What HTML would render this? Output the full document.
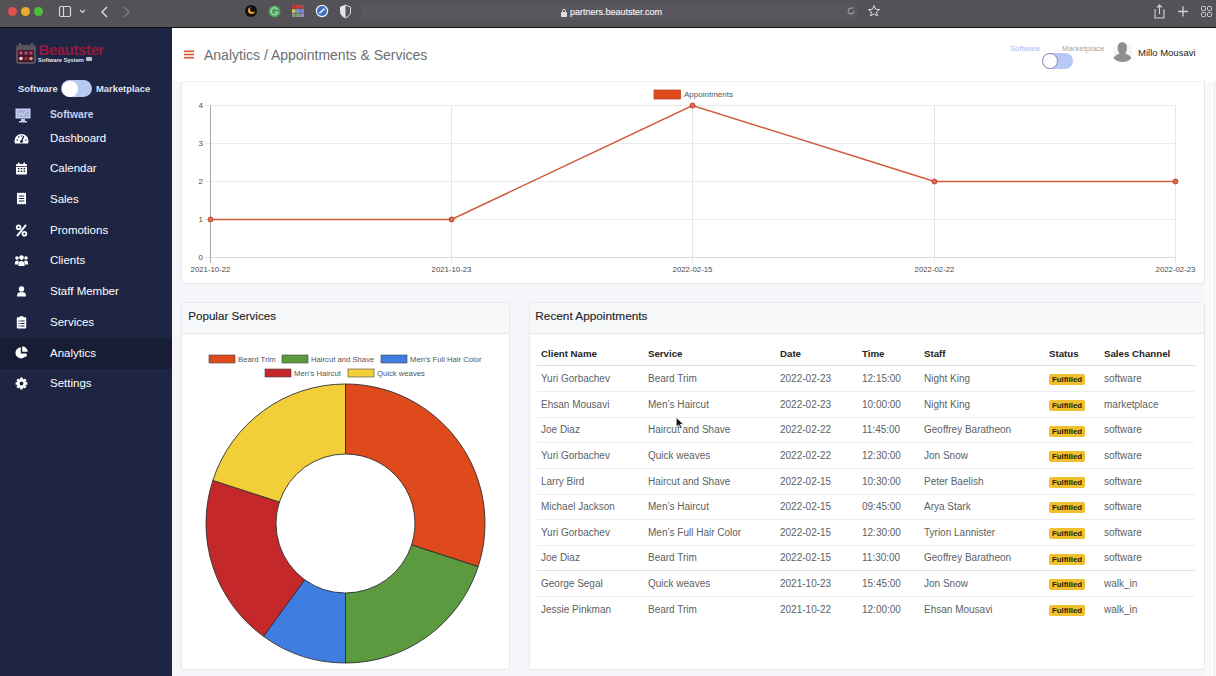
<!DOCTYPE html><html><head><meta charset="utf-8"><style>*{margin:0;padding:0;box-sizing:border-box}
html,body{width:1216px;height:676px;overflow:hidden;font-family:"Liberation Sans",sans-serif;background:#f5f5fa;position:relative}
.abs{position:absolute}
#chrome{position:absolute;left:0;top:0;width:1216px;height:28px;background:#545257;border-bottom:1px solid #151515}
#side{position:absolute;left:0;top:28px;width:172px;height:648px;background:#1e2542}
#hdr{position:absolute;left:172px;top:28px;width:1044px;height:53px;background:#fff}
.card{position:absolute;background:#fff;border:1px solid #e6e8ec;border-radius:3px}
.ch{position:absolute;left:0;top:0;right:0;height:31px;background:#f6f7f9;border-bottom:1px solid #e4e6ea;font-size:11.6px;color:#24272b;padding:5.6px 6.3px;white-space:nowrap;-webkit-text-stroke:0.15px #24272b}
.nav{position:absolute;left:50px;font-size:11.5px;color:#fff;white-space:nowrap}
.t{position:absolute;font-size:10px;color:#5c5f63;white-space:nowrap}
.th{position:absolute;font-size:9.7px;color:#222;font-weight:bold;white-space:nowrap}
.badge{position:absolute;background:#f0c02f;color:#2a2200;font-weight:bold;font-size:7.9px;border-radius:2px;height:11px;line-height:11.5px;width:36px;text-align:center}
.rl{position:absolute;height:1px;background:#eceef0}
</style></head><body><div id="chrome">
<div class="abs" style="left:8px;top:7px;width:9px;height:9px;border-radius:50%;background:#e0524a"></div>
<div class="abs" style="left:21px;top:7px;width:9px;height:9px;border-radius:50%;background:#e7ad2b"></div>
<div class="abs" style="left:34px;top:7px;width:9px;height:9px;border-radius:50%;background:#4fbf3a"></div>
<svg class="abs" style="left:56px;top:4px" width="100" height="16" viewBox="0 0 100 16">
 <rect x="3.5" y="2.5" width="11" height="10" rx="1.5" fill="none" stroke="#d8d6da" stroke-width="1.2"/>
 <line x1="7.5" y1="2.5" x2="7.5" y2="12.5" stroke="#d8d6da" stroke-width="1.2"/>
 <polyline points="24,6 26.5,8.5 29,6" fill="none" stroke="#d8d6da" stroke-width="1.2"/>
 <polyline points="51,3 46,8 51,13" fill="none" stroke="#d8d6da" stroke-width="1.5"/>
 <polyline points="68,3 73,8 68,13" fill="none" stroke="#7a777e" stroke-width="1.5"/>
</svg>
<div class="abs" style="left:245px;top:5px;width:12px;height:12px;border-radius:50%;background:#111"></div>
<div class="abs" style="left:248px;top:7px;width:7px;height:7px;border-radius:50%;background:#e8a52a"></div>
<div class="abs" style="left:250px;top:6px;width:6px;height:6px;border-radius:50%;background:#111"></div>
<svg class="abs" style="left:267px;top:4px" width="15" height="15" viewBox="0 0 15 15"><circle cx="7.5" cy="7.5" r="6" fill="#4c9e58"/><path d="M10.5 5.5 A3.5 3.5 0 1 0 10.8 8.5 L8 8.5" fill="none" stroke="#9fd8a4" stroke-width="1.5"/></svg>
<svg class="abs" style="left:291px;top:4px" width="14" height="14" viewBox="0 0 14 14"><g><rect x="1" y="1" width="3.6" height="3.6" fill="#c9363a"/><rect x="5.2" y="1" width="3.6" height="3.6" fill="#d63b3b"/><rect x="9.4" y="1" width="3.6" height="3.6" fill="#d03a44"/><rect x="1" y="5.2" width="3.6" height="3.6" fill="#d9c45a"/><rect x="5.2" y="5.2" width="3.6" height="3.6" fill="#7f9fd8"/><rect x="9.4" y="5.2" width="3.6" height="3.6" fill="#6f8fd8"/><rect x="1" y="9.4" width="3.6" height="3.6" fill="#7fa070"/><rect x="5.2" y="9.4" width="3.6" height="3.6" fill="#80a878"/><rect x="9.4" y="9.4" width="3.6" height="3.6" fill="#9a90c8"/></g></svg>
<svg class="abs" style="left:315px;top:4px" width="14" height="14" viewBox="0 0 14 14"><circle cx="7" cy="7" r="5.6" fill="#3f6fb8" stroke="#e8eefc" stroke-width="1.3"/><path d="M4.3 9.2 L9.7 4.8" stroke="#c8dcff" stroke-width="1.8"/></svg>
<svg class="abs" style="left:339px;top:4px" width="13" height="15" viewBox="0 0 13 15"><path d="M6.5 1.2 L11.5 3 L11.5 7.5 Q11.5 11.8 6.5 13.8 Q1.5 11.8 1.5 7.5 L1.5 3 Z" fill="#56535a" stroke="#e6e4e8" stroke-width="1"/><path d="M6.5 1.2 L1.5 3 L1.5 7.5 Q1.5 11.8 6.5 13.8 Z" fill="#e6e4e8"/></svg>
<div class="abs" style="left:361px;top:3px;width:496px;height:17px;border-radius:4px;background:#59575d"></div>
<svg class="abs" style="left:560px;top:8px" width="8" height="9" viewBox="0 0 8 9"><rect x="1" y="4" width="6" height="5" rx="1" fill="#ddd"/><path d="M2.5 4 V2.8 A1.5 1.5 0 0 1 5.5 2.8 V4" fill="none" stroke="#ddd" stroke-width="1"/></svg>
<div class="abs" style="left:570px;top:7.3px;font-size:9px;color:#f2f0f4;-webkit-text-stroke:0.15px #f2f0f4">partners.beautster.com</div>
<svg class="abs" style="left:846px;top:6px" width="10" height="10" viewBox="0 0 10 10"><path d="M8 5 A3 3 0 1 1 5 2 L7 2" fill="none" stroke="#aaa" stroke-width="1"/></svg>
<svg class="abs" style="left:867px;top:4px" width="14" height="14" viewBox="0 0 14 14"><path d="M7 1.5 L8.6 5.3 L12.6 5.5 L9.5 8 L10.5 12 L7 9.8 L3.5 12 L4.5 8 L1.4 5.5 L5.4 5.3 Z" fill="none" stroke="#dcdade" stroke-width="1"/></svg>
<svg class="abs" style="left:1152px;top:3px" width="64" height="18" viewBox="0 0 64 18">
 <path d="M4 7 H3 V15 H12 V7 H11" fill="none" stroke="#d6d4d8" stroke-width="1.1"/><path d="M7.5 11 V2 M5 4.5 L7.5 2 L10 4.5" fill="none" stroke="#d6d4d8" stroke-width="1.1"/>
 <path d="M31 3.5 V13.5 M26 8.5 H36" stroke="#d6d4d8" stroke-width="1.3"/>
 <rect x="49.5" y="3.5" width="4" height="4" rx="1" fill="none" stroke="#d6d4d8" stroke-width="1"/><rect x="55.5" y="3.5" width="4" height="4" rx="1" fill="none" stroke="#d6d4d8" stroke-width="1"/>
 <rect x="49.5" y="9.5" width="4" height="4" rx="1" fill="none" stroke="#d6d4d8" stroke-width="1"/><rect x="55.5" y="9.5" width="4" height="4" rx="1" fill="none" stroke="#d6d4d8" stroke-width="1"/>
</svg>
</div><div id="side"><svg class="abs" style="left:15px;top:15px" width="24" height="22" viewBox="0 0 24 22">
<rect x="1" y="2" width="20" height="19" rx="3" fill="#57535c"/>
<path d="M4 2 L5 0 L6 2 M16 2 L17 0 L18 2" stroke="#777" stroke-width="0.8" fill="none"/>
<rect x="3" y="7" width="16" height="12" fill="#4a1828"/>
<circle cx="6" cy="10" r="1.8" fill="#c5507f"/><circle cx="11" cy="10" r="1.8" fill="#8a5aa8"/><circle cx="16" cy="10" r="1.8" fill="#c03a62"/>
<circle cx="6" cy="15.5" r="1.8" fill="#e8dcdc"/><circle cx="11" cy="15.5" r="1.8" fill="#a82a3a"/><circle cx="16" cy="15.5" r="1.8" fill="#d8a070"/>
</svg>
<div class="abs" style="left:38.5px;top:13.6px;font-size:14.8px;font-weight:bold;color:#951a3d;letter-spacing:-0.3px">Beautster</div>
<div class="abs" style="left:38px;top:29px;font-size:5.6px;font-weight:bold;color:#e6e8f4;letter-spacing:0.05px">Software System</div>
<div class="abs" style="left:86px;top:28.5px;width:6px;height:4.5px;background:#b9bdd0;border-radius:1px"></div>
<div class="abs" style="left:18px;top:55.3px;font-size:9.4px;font-weight:bold;color:#dfe3f5">Software</div>
<div class="abs" style="left:61px;top:52px;width:31px;height:17px;border-radius:9px;background:#b8c8f0"></div>
<div class="abs" style="left:61.5px;top:52.5px;width:16px;height:16px;border-radius:50%;background:#fff"></div>
<div class="abs" style="left:96px;top:55.3px;font-size:9.4px;font-weight:bold;color:#dfe3f5">Marketplace</div>
<svg class="abs" style="left:15px;top:80px" width="17" height="15" viewBox="0 0 17 15"><rect x="0.5" y="0.5" width="15" height="10" fill="#c9d0f2"/><rect x="2" y="2" width="12" height="7" fill="#a9b2dc"/><path d="M3 8 L6 5 L8 7 L12 3" stroke="#e8ecff" stroke-width="0.8" fill="none"/><rect x="6" y="11" width="4" height="2" fill="#c9d0f2"/><rect x="4" y="13" width="8" height="1.5" fill="#c9d0f2"/></svg>
<div class="abs" style="left:50px;top:80.5px;font-size:10.3px;font-weight:bold;color:#c9cef0">Software</div><svg class="abs" style="left:13.5px;top:102.8px" width="15" height="15" viewBox="0 0 15 15"><path d="M1 12.5 Q0.5 11 0.5 10 A7 7 0 0 1 14.5 10 Q14.5 11 14 12.5 Z" fill="#fff"/><path d="M7.5 10.5 L9.8 5" stroke="#1e2542" stroke-width="1.3"/><circle cx="7.5" cy="10.5" r="1.4" fill="#1e2542"/><circle cx="3.3" cy="9" r="0.8" fill="#1e2542"/><circle cx="4.8" cy="6" r="0.8" fill="#1e2542"/><circle cx="7.5" cy="5" r="0.8" fill="#1e2542"/><circle cx="11.8" cy="9" r="0.8" fill="#1e2542"/></svg><div class="nav" style="top:103.5px">Dashboard</div><svg class="abs" style="left:13.5px;top:133.1px" width="15" height="15" viewBox="0 0 15 15"><rect x="2" y="3" width="11" height="10.5" rx="1" fill="#fff"/><rect x="4" y="1.5" width="1.6" height="3" rx="0.5" fill="#fff"/><rect x="9.4" y="1.5" width="1.6" height="3" rx="0.5" fill="#fff"/><g fill="#1e2542"><rect x="2" y="5" width="11" height="0.8"/><rect x="3.8" y="7" width="1.6" height="1.4"/><rect x="6.7" y="7" width="1.6" height="1.4"/><rect x="9.6" y="7" width="1.6" height="1.4"/><rect x="3.8" y="9.6" width="1.6" height="1.4"/><rect x="6.7" y="9.6" width="1.6" height="1.4"/><rect x="9.6" y="9.6" width="1.6" height="1.4"/></g></svg><div class="nav" style="top:134.2px">Calendar</div><svg class="abs" style="left:13.5px;top:163.3px" width="15" height="15" viewBox="0 0 15 15"><path d="M3 1.5 L4.5 2.3 L6 1.5 L7.5 2.3 L9 1.5 L10.5 2.3 L12 1.5 V13.5 L10.5 12.7 L9 13.5 L7.5 12.7 L6 13.5 L4.5 12.7 L3 13.5 Z" fill="#fff"/><g fill="#1e2542"><rect x="4.8" y="4.5" width="5.4" height="1"/><rect x="4.8" y="7" width="5.4" height="1"/><rect x="4.8" y="9.5" width="5.4" height="1"/></g></svg><div class="nav" style="top:164.9px">Sales</div><svg class="abs" style="left:13.5px;top:194.5px" width="15" height="15" viewBox="0 0 15 15"><circle cx="4.6" cy="4.2" r="1.9" fill="none" stroke="#fff" stroke-width="1.8"/><circle cx="10.4" cy="10.8" r="1.9" fill="none" stroke="#fff" stroke-width="1.8"/><path d="M12 1.8 L3 13.2" stroke="#fff" stroke-width="1.9"/></svg><div class="nav" style="top:195.7px">Promotions</div><svg class="abs" style="left:13.5px;top:225.0px" width="15" height="15" viewBox="0 0 15 15"><circle cx="7.5" cy="4.6" r="2.3" fill="#fff"/><circle cx="3" cy="5" r="1.8" fill="#fff"/><circle cx="12" cy="5" r="1.8" fill="#fff"/><path d="M4.3 13 Q4.3 8 7.5 8 Q10.7 8 10.7 13 Z" fill="#fff"/><path d="M0.8 11.5 Q0.8 7.6 3 7.6 Q4.5 7.6 5 8.5 L4 11.5 Z" fill="#fff"/><path d="M14.2 11.5 Q14.2 7.6 12 7.6 Q10.5 7.6 10 8.5 L11 11.5 Z" fill="#fff"/></svg><div class="nav" style="top:226.4px">Clients</div><svg class="abs" style="left:13.5px;top:256.1px" width="15" height="15" viewBox="0 0 15 15"><circle cx="7.5" cy="5" r="2.7" fill="#fff"/><path d="M3 12.5 Q3 8.3 6 8.3 L9 8.3 Q12 8.3 12 12.5 Z" fill="#fff"/></svg><div class="nav" style="top:257.1px">Staff Member</div><svg class="abs" style="left:13.5px;top:286.5px" width="15" height="15" viewBox="0 0 15 15"><rect x="2.8" y="2.2" width="9.4" height="11.3" rx="1" fill="#fff"/><rect x="5.5" y="1.2" width="4" height="2.5" rx="0.6" fill="#fff"/><g fill="#1e2542"><rect x="4.4" y="5.5" width="1.2" height="1"/><rect x="6.4" y="5.5" width="4.2" height="1"/><rect x="4.4" y="8" width="1.2" height="1"/><rect x="6.4" y="8" width="4.2" height="1"/><rect x="4.4" y="10.5" width="1.2" height="1"/><rect x="6.4" y="10.5" width="4.2" height="1"/></g></svg><div class="nav" style="top:287.8px">Services</div><div class="abs" style="left:0;top:309.6px;width:172px;height:31px;background:#181d36"></div><svg class="abs" style="left:13.5px;top:316.7px" width="15" height="15" viewBox="0 0 15 15"><path d="M6.8 2.2 A5.6 5.6 0 1 0 12.6 8.4 L6.8 8.4 Z" fill="#fff"/><path d="M8.2 1.2 A5.6 5.6 0 0 1 13.7 6.8 L8.2 6.8 Z" fill="#fff"/><path d="M8.5 9.2 L13.2 9.2 A5.6 5.6 0 0 1 11.5 12.2 Z" fill="#fff"/></svg><div class="nav" style="top:318.5px">Analytics</div><svg class="abs" style="left:13.5px;top:348.2px" width="15" height="15" viewBox="0 0 15 15"><g fill="#fff"><circle cx="7.5" cy="7.5" r="4.6"/></g><g stroke="#fff" stroke-width="2.6" stroke-linecap="butt"><line x1="7.5" y1="1.6" x2="7.5" y2="13.4"/><line x1="1.6" y1="7.5" x2="13.4" y2="7.5"/><line x1="3.3" y1="3.3" x2="11.7" y2="11.7"/><line x1="11.7" y1="3.3" x2="3.3" y2="11.7"/></g><circle cx="7.5" cy="7.5" r="1.9" fill="#1e2542"/></svg><div class="nav" style="top:349.3px">Settings</div></div><div class="card" style="left:181px;top:81px;width:1024px;height:203px;border-top-color:#f0f0f3"></div><svg class="abs" style="left:0;top:0" width="1216" height="676" viewBox="0 0 1216 676"><line x1="205" y1="257.5" x2="1176" y2="257.5" stroke="#dcdcdc" stroke-width="1"/><text x="203" y="259.8" font-size="8" fill="#4a4a4a" text-anchor="end">0</text><line x1="205" y1="219.5" x2="1176" y2="219.5" stroke="#ebebeb" stroke-width="1"/><text x="203" y="221.8" font-size="8" fill="#4a4a4a" text-anchor="end">1</text><line x1="205" y1="181.5" x2="1176" y2="181.5" stroke="#ebebeb" stroke-width="1"/><text x="203" y="183.8" font-size="8" fill="#4a4a4a" text-anchor="end">2</text><line x1="205" y1="143.5" x2="1176" y2="143.5" stroke="#ebebeb" stroke-width="1"/><text x="203" y="145.8" font-size="8" fill="#4a4a4a" text-anchor="end">3</text><line x1="205" y1="105.5" x2="1176" y2="105.5" stroke="#ebebeb" stroke-width="1"/><text x="203" y="107.8" font-size="8" fill="#4a4a4a" text-anchor="end">4</text><line x1="210.5" y1="105" x2="210.5" y2="263" stroke="#a8a8a8" stroke-width="1"/><text x="210.5" y="271.5" font-size="7.8" fill="#4a4a4a" text-anchor="middle">2021-10-22</text><line x1="451.5" y1="105" x2="451.5" y2="263" stroke="#e6e6e6" stroke-width="1"/><text x="451.5" y="271.5" font-size="7.8" fill="#4a4a4a" text-anchor="middle">2021-10-23</text><line x1="692.5" y1="105" x2="692.5" y2="263" stroke="#e6e6e6" stroke-width="1"/><text x="692.5" y="271.5" font-size="7.8" fill="#4a4a4a" text-anchor="middle">2022-02-15</text><line x1="934.5" y1="105" x2="934.5" y2="263" stroke="#e6e6e6" stroke-width="1"/><text x="934.5" y="271.5" font-size="7.8" fill="#4a4a4a" text-anchor="middle">2022-02-22</text><line x1="1175.5" y1="105" x2="1175.5" y2="263" stroke="#e6e6e6" stroke-width="1"/><text x="1175.5" y="271.5" font-size="7.8" fill="#4a4a4a" text-anchor="middle">2022-02-23</text><polyline points="210.5,219.5 451.5,219.5 692.5,105.5 934.5,181.5 1175.5,181.5" fill="none" stroke="#cf5a3c" stroke-width="1.5"/><circle cx="210.5" cy="219.5" r="2.5" fill="#de6a4a" stroke="#b84a32" stroke-width="1"/><circle cx="451.5" cy="219.5" r="2.5" fill="#de6a4a" stroke="#b84a32" stroke-width="1"/><circle cx="692.5" cy="105.5" r="2.5" fill="#de6a4a" stroke="#b84a32" stroke-width="1"/><circle cx="934.5" cy="181.5" r="2.5" fill="#de6a4a" stroke="#b84a32" stroke-width="1"/><circle cx="1175.5" cy="181.5" r="2.5" fill="#de6a4a" stroke="#b84a32" stroke-width="1"/><rect x="654" y="90" width="26.5" height="9" fill="#e04b1d" stroke="#c0452a" stroke-width="0.8"/><text x="684" y="97" font-size="8" fill="#555">Appointments</text></svg><div class="card" style="left:181px;top:302px;width:329px;height:368px"><div class="ch">Popular Services</div></div><svg class="abs" style="left:0;top:0" width="1216" height="676" viewBox="0 0 1216 676"><path d="M345.50 384.00 A139.50 139.50 0 0 1 478.17 566.61 L411.60 544.98 A69.50 69.50 0 0 0 345.50 454.00 Z" fill="#de4a1c" stroke="#2e2e2e" stroke-width="0.9"/><path d="M478.17 566.61 A139.50 139.50 0 0 1 345.50 663.00 L345.50 593.00 A69.50 69.50 0 0 0 411.60 544.98 Z" fill="#5b9a3e" stroke="#2e2e2e" stroke-width="0.9"/><path d="M345.50 663.00 A139.50 139.50 0 0 1 263.50 636.36 L304.65 579.73 A69.50 69.50 0 0 0 345.50 593.00 Z" fill="#3f7de0" stroke="#2e2e2e" stroke-width="0.9"/><path d="M263.50 636.36 A139.50 139.50 0 0 1 212.83 480.39 L279.40 502.02 A69.50 69.50 0 0 0 304.65 579.73 Z" fill="#c4282a" stroke="#2e2e2e" stroke-width="0.9"/><path d="M212.83 480.39 A139.50 139.50 0 0 1 345.50 384.00 L345.50 454.00 A69.50 69.50 0 0 0 279.40 502.02 Z" fill="#f2cf39" stroke="#2e2e2e" stroke-width="0.9"/><rect x="209.0" y="355.0" width="26" height="8" fill="#de4a1c" stroke="#444" stroke-width="0.6"/><text x="238.0" y="362.0" font-size="7.7" fill="#555">Beard Trim</text><rect x="282.0" y="355.0" width="26" height="8" fill="#5b9a3e" stroke="#444" stroke-width="0.6"/><text x="311.0" y="362.0" font-size="7.7" fill="#555">Haircut and Shave</text><rect x="381.0" y="355.0" width="26" height="8" fill="#3f7de0" stroke="#444" stroke-width="0.6"/><text x="410.0" y="362.0" font-size="7.7" fill="#555">Men&#8217;s Full Hair Color</text><rect x="265.0" y="369.0" width="26" height="8" fill="#c4282a" stroke="#444" stroke-width="0.6"/><text x="294.0" y="376.0" font-size="7.7" fill="#555">Men&#8217;s Haircut</text><rect x="348.0" y="369.0" width="26" height="8" fill="#f2cf39" stroke="#444" stroke-width="0.6"/><text x="377.0" y="376.0" font-size="7.7" fill="#555">Quick weaves</text></svg><div class="card" style="left:529px;top:302px;width:676px;height:368px"><div class="ch" style="font-size:11.8px;padding-left:5.3px">Recent Appointments</div></div><div class="th" style="left:541px;top:348.2px">Client Name</div><div class="th" style="left:648px;top:348.2px">Service</div><div class="th" style="left:780px;top:348.2px">Date</div><div class="th" style="left:862px;top:348.2px">Time</div><div class="th" style="left:924px;top:348.2px">Staff</div><div class="th" style="left:1049px;top:348.2px">Status</div><div class="th" style="left:1104px;top:348.2px">Sales Channel</div><div class="rl" style="left:537px;top:365px;width:658px;background:#dcdee2"></div><div class="t" style="left:541px;top:373.0px">Yuri Gorbachev</div><div class="t" style="left:648px;top:373.0px">Beard Trim</div><div class="t" style="left:780px;top:373.0px">2022-02-23</div><div class="t" style="left:862px;top:373.0px">12:15:00</div><div class="t" style="left:924px;top:373.0px">Night King</div><div class="badge" style="left:1049px;top:374.3px">Fulfilled</div><div class="t" style="left:1104px;top:373.0px">software</div><div class="rl" style="left:537px;top:391.1px;width:658px"></div><div class="t" style="left:541px;top:398.6px">Ehsan Mousavi</div><div class="t" style="left:648px;top:398.6px">Men&#8217;s Haircut</div><div class="t" style="left:780px;top:398.6px">2022-02-23</div><div class="t" style="left:862px;top:398.6px">10:00:00</div><div class="t" style="left:924px;top:398.6px">Night King</div><div class="badge" style="left:1049px;top:399.9px">Fulfilled</div><div class="t" style="left:1104px;top:398.6px">marketplace</div><div class="rl" style="left:537px;top:416.7px;width:658px"></div><div class="t" style="left:541px;top:424.2px">Joe Diaz</div><div class="t" style="left:648px;top:424.2px">Haircut and Shave</div><div class="t" style="left:780px;top:424.2px">2022-02-22</div><div class="t" style="left:862px;top:424.2px">11:45:00</div><div class="t" style="left:924px;top:424.2px">Geoffrey Baratheon</div><div class="badge" style="left:1049px;top:425.5px">Fulfilled</div><div class="t" style="left:1104px;top:424.2px">software</div><div class="rl" style="left:537px;top:442.3px;width:658px"></div><div class="t" style="left:541px;top:449.9px">Yuri Gorbachev</div><div class="t" style="left:648px;top:449.9px">Quick weaves</div><div class="t" style="left:780px;top:449.9px">2022-02-22</div><div class="t" style="left:862px;top:449.9px">12:30:00</div><div class="t" style="left:924px;top:449.9px">Jon Snow</div><div class="badge" style="left:1049px;top:451.2px">Fulfilled</div><div class="t" style="left:1104px;top:449.9px">software</div><div class="rl" style="left:537px;top:468.0px;width:658px"></div><div class="t" style="left:541px;top:475.5px">Larry Bird</div><div class="t" style="left:648px;top:475.5px">Haircut and Shave</div><div class="t" style="left:780px;top:475.5px">2022-02-15</div><div class="t" style="left:862px;top:475.5px">10:30:00</div><div class="t" style="left:924px;top:475.5px">Peter Baelish</div><div class="badge" style="left:1049px;top:476.8px">Fulfilled</div><div class="t" style="left:1104px;top:475.5px">software</div><div class="rl" style="left:537px;top:493.6px;width:658px"></div><div class="t" style="left:541px;top:501.1px">Michael Jackson</div><div class="t" style="left:648px;top:501.1px">Men&#8217;s Haircut</div><div class="t" style="left:780px;top:501.1px">2022-02-15</div><div class="t" style="left:862px;top:501.1px">09:45:00</div><div class="t" style="left:924px;top:501.1px">Arya Stark</div><div class="badge" style="left:1049px;top:502.4px">Fulfilled</div><div class="t" style="left:1104px;top:501.1px">software</div><div class="rl" style="left:537px;top:519.2px;width:658px"></div><div class="t" style="left:541px;top:526.7px">Yuri Gorbachev</div><div class="t" style="left:648px;top:526.7px">Men&#8217;s Full Hair Color</div><div class="t" style="left:780px;top:526.7px">2022-02-15</div><div class="t" style="left:862px;top:526.7px">12:30:00</div><div class="t" style="left:924px;top:526.7px">Tyrion Lannister</div><div class="badge" style="left:1049px;top:528.0px">Fulfilled</div><div class="t" style="left:1104px;top:526.7px">software</div><div class="rl" style="left:537px;top:544.8px;width:658px"></div><div class="t" style="left:541px;top:552.3px">Joe Diaz</div><div class="t" style="left:648px;top:552.3px">Beard Trim</div><div class="t" style="left:780px;top:552.3px">2022-02-15</div><div class="t" style="left:862px;top:552.3px">11:30:00</div><div class="t" style="left:924px;top:552.3px">Geoffrey Baratheon</div><div class="badge" style="left:1049px;top:553.6px">Fulfilled</div><div class="t" style="left:1104px;top:552.3px">software</div><div class="rl" style="left:537px;top:570.4px;width:658px;background:#dfe1e4"></div><div class="t" style="left:541px;top:578.0px">George Segal</div><div class="t" style="left:648px;top:578.0px">Quick weaves</div><div class="t" style="left:780px;top:578.0px">2021-10-23</div><div class="t" style="left:862px;top:578.0px">15:45:00</div><div class="t" style="left:924px;top:578.0px">Jon Snow</div><div class="badge" style="left:1049px;top:579.3px">Fulfilled</div><div class="t" style="left:1104px;top:578.0px">walk_in</div><div class="rl" style="left:537px;top:596.1px;width:658px"></div><div class="t" style="left:541px;top:603.6px">Jessie Pinkman</div><div class="t" style="left:648px;top:603.6px">Beard Trim</div><div class="t" style="left:780px;top:603.6px">2021-10-22</div><div class="t" style="left:862px;top:603.6px">12:00:00</div><div class="t" style="left:924px;top:603.6px">Ehsan Mousavi</div><div class="badge" style="left:1049px;top:604.9px">Fulfilled</div><div class="t" style="left:1104px;top:603.6px">walk_in</div><div class="abs" style="left:1205px;top:80px;width:11px;height:596px;background:#fafafb"></div><div class="abs" style="left:1214px;top:80px;width:1px;height:596px;background:#e9e9ed"></div><svg class="abs" style="left:674.8px;top:417px" width="11" height="14" viewBox="0 0 9 12" preserveAspectRatio="none"><path d="M1 0.5 L1 8.5 L3 6.8 L4.6 10 L5.8 9.4 L4.3 6.3 L7 6.2 Z" fill="#111" stroke="#fff" stroke-width="0.6"/></svg><div id="hdr">
<svg class="abs" style="left:12px;top:22px" width="10" height="9" viewBox="0 0 10 9"><g fill="#d9532b"><rect x="0" y="0.5" width="10" height="1.6"/><rect x="0" y="3.7" width="10" height="1.6"/><rect x="0" y="6.9" width="10" height="1.6"/></g></svg>
<div class="abs" style="left:32px;top:19px;font-size:14px;color:#6c6f73">Analytics / Appointments &amp; Services</div>
<div class="abs" style="left:838px;top:15.5px;font-size:7.6px;color:#aab8e8">Software</div>
<div class="abs" style="left:890px;top:15.5px;font-size:7.8px;color:#a8a8a8">Marketplace</div>
<div class="abs" style="left:870px;top:25px;width:31px;height:16px;border-radius:8px;background:#b7c8f5"></div>
<div class="abs" style="left:870px;top:25px;width:16px;height:16px;border-radius:50%;background:#fff;border:1px solid #8a8fb0"></div>
<svg class="abs" style="left:940px;top:13px" width="21" height="22" viewBox="0 0 21 22"><circle cx="10.5" cy="11" r="10" fill="#f7f7f7"/><path d="M10.3 1.3 Q15 1.3 15 7 Q15 11 13.2 12.8 Q18.5 14 19.3 17.5 Q15.5 21 10.5 21 Q5.5 21 1.7 17.5 Q2.5 14 7.6 12.8 Q5.6 11 5.6 7 Q5.6 1.3 10.3 1.3 Z" fill="#8f8f8f"/></svg>
<div class="abs" style="left:966px;top:19px;font-size:9.5px;color:#222">Millo Mousavi</div>
</div></body></html>
